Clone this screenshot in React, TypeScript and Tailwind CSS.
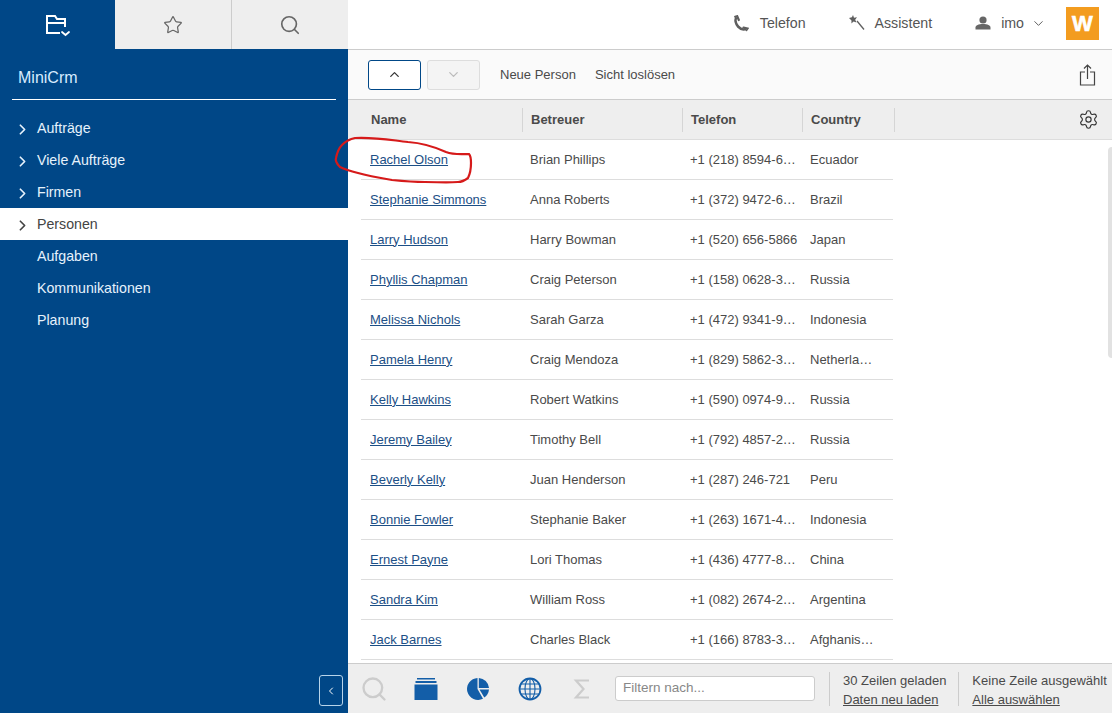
import { ChevronDown, ChevronLeft, ChevronRight, ChevronUp, Search, Settings, Star } from "lucide-react";

const menu = [
  { label: "Aufträge", arrow: true },
  { label: "Viele Aufträge", arrow: true },
  { label: "Firmen", arrow: true },
  { label: "Personen", arrow: true, active: true },
  { label: "Aufgaben" },
  { label: "Kommunikationen" },
  { label: "Planung" },
];

const people = [
  ["Rachel Olson", "Brian Phillips", "+1 (218) 8594-6…", "Ecuador"],
  ["Stephanie Simmons", "Anna Roberts", "+1 (372) 9472-6…", "Brazil"],
  ["Larry Hudson", "Harry Bowman", "+1 (520) 656-5866", "Japan"],
  ["Phyllis Chapman", "Craig Peterson", "+1 (158) 0628-3…", "Russia"],
  ["Melissa Nichols", "Sarah Garza", "+1 (472) 9341-9…", "Indonesia"],
  ["Pamela Henry", "Craig Mendoza", "+1 (829) 5862-3…", "Netherla…"],
  ["Kelly Hawkins", "Robert Watkins", "+1 (590) 0974-9…", "Russia"],
  ["Jeremy Bailey", "Timothy Bell", "+1 (792) 4857-2…", "Russia"],
  ["Beverly Kelly", "Juan Henderson", "+1 (287) 246-721", "Peru"],
  ["Bonnie Fowler", "Stephanie Baker", "+1 (263) 1671-4…", "Indonesia"],
  ["Ernest Payne", "Lori Thomas", "+1 (436) 4777-8…", "China"],
  ["Sandra Kim", "William Ross", "+1 (082) 2674-2…", "Argentina"],
  ["Jack Barnes", "Charles Black", "+1 (166) 8783-3…", "Afghanis…"],
];

function FolderIcon() {
  return (
    <svg width="26" height="24" viewBox="0 0 26 24" fill="none" stroke="white" strokeWidth="2">
      <path d="M15 19H2V2h8l2 3h8v8" />
      <path d="M2 9h18" />
      <path d="M17 18l3.500 3 3.500-3" strokeWidth="1.800" strokeLinecap="round" />
    </svg>
  );
}

function PhoneIcon() {
  return (
    <svg width="16" height="17" viewBox="0 0 16 17" fill="none" stroke="#5f5f5f">
      <path d="M3.500 2.500C1.500 5 3 9 5 11.500C7.500 14 10.500 15.500 13 13.500" strokeWidth="2.600" />
      <path d="M2.200 1.800L4.200 1.200L5.800 5" strokeWidth="2.200" strokeLinecap="round" />
      <path d="M10.500 12.500L14.500 13.500L13.500 15" strokeWidth="2.200" strokeLinecap="round" />
    </svg>
  );
}

function WandIcon() {
  return (
    <svg width="16" height="16" viewBox="0 0 16 16" fill="#5f5f5f">
      <path d="M4 0l1 2.700 3-.4-1.800 2.400 1.300 2.700-2.900-.9-2.200 2 .1-3L0 3l2.900-.7z" />
      <path d="M7.500 6.500l1-1 7 8.500-1 1z" />
    </svg>
  );
}

function UserIcon() {
  return (
    <svg width="16" height="14" viewBox="0 0 16 14" fill="#666">
      <circle cx="8" cy="4" r="3.600" />
      <path d="M0.500 13.500v-2c0-2 3-3.500 7.500-3.500s7.500 1.500 7.500 3.500v2z" />
    </svg>
  );
}

function ShareIcon() {
  return (
    <svg width="18" height="22" viewBox="0 0 18 22" fill="none" stroke="#444" strokeWidth="1.200">
      <path d="M6 8H1.500v13h14V8H11" />
      <path d="M8.500 15V1M5 4.500l3.500-3.500 3.500 3.500" />
    </svg>
  );
}

function StackIcon() {
  return (
    <svg width="24" height="24" viewBox="0 0 24 24" fill="#135ea8">
      <rect x="3" y="1" width="18" height="1.500" />
      <rect x="1.500" y="4" width="21" height="2" />
      <rect x="0.500" y="7.500" width="23" height="15.500" />
    </svg>
  );
}

function PieIcon() {
  return (
    <svg width="24" height="24" viewBox="0 0 24 24" fill="#135ea8">
      <path d="M11.500 1a11 11 0 1 0 5.500 20.800l-5.500-9.800z" />
      <path d="M12.800 1a11 11 0 0 1 10.200 10h-10.200z" />
      <path d="M13.500 12.500h9.500a11 11 0 0 1-4.700 8z" />
    </svg>
  );
}

function GlobeIcon() {
  return (
    <svg width="24" height="24" viewBox="0 0 24 24" fill="none" stroke="#135ea8">
      <circle cx="12" cy="12" r="10.500" strokeWidth="1.800" />
      <ellipse cx="12" cy="12" rx="5" ry="10.500" strokeWidth="1.100" />
      <path d="M12 1.500v21M1.500 12h21M3 7h18M3 17h18" strokeWidth="1.100" />
    </svg>
  );
}

function SigmaIcon() {
  return (
    <svg width="24" height="24" viewBox="0 0 24 24" fill="none" stroke="#ccc" strokeWidth="2.200">
      <path d="M19 3.500H6l7.500 8.500L6 20.500h13" />
    </svg>
  );
}

function App() {
  return (
    <div className="relative flex h-[713px] w-[1112px] overflow-hidden bg-white font-['Liberation_Sans',Arial,sans-serif] text-[13px] text-[#4a4a4a]">
      <aside className="flex w-[348px] shrink-0 flex-col bg-[#004787] text-white">
        <div className="flex h-[49px] shrink-0">
          <div className="flex w-[115px] items-center justify-center pt-[2px]">
            <FolderIcon />
          </div>
          <div className="flex w-[117px] items-center justify-center border-r border-[#ccc] bg-[#eee]">
            <Star size={20} strokeWidth={1.5} className="text-[#666]" />
          </div>
          <div className="flex w-[116px] items-center justify-center bg-[#eee]">
            <Search size={22} strokeWidth={1.8} className="text-[#666]" />
          </div>
        </div>
        <div className="mx-3 flex h-[51px] shrink-0 items-center border-b border-white pl-1.5 pt-[8px] text-base text-[#d7ecff]">
          MiniCrm
        </div>
        <nav className="mt-3 flex flex-col text-[14.200px]">
          {menu.map((item) => (
            <div
              key={item.label}
              className={`flex h-8 items-center pt-[2px] ${item.active ? "bg-white text-[#444]" : "text-[#e6f2fc]"}`}
            >
              <div className="flex w-[37px] shrink-0 justify-center pl-[7px]">
                {item.arrow && <ChevronRight size={17} strokeWidth={2.400} />}
              </div>
              {item.label}
            </div>
          ))}
        </nav>
        <div className="mt-auto mb-[7px] mr-[5px] flex justify-end">
          <div className="flex h-[31px] w-6 items-center justify-center rounded-[3px] border border-[#b8d4ea]">
            <ChevronLeft size={12} strokeWidth={2} />
          </div>
        </div>
      </aside>

      <main className="flex min-w-0 flex-1 flex-col">
        <header className="flex h-[50px] shrink-0 items-center justify-end border-b border-[#ccc] pb-[2px] pr-[13px] text-[14.200px] text-[#555]">
          <div className="flex items-center">
            <PhoneIcon />
            <span className="ml-[11px]">Telefon</span>
          </div>
          <div className="ml-[43px] flex items-center">
            <WandIcon />
            <span className="ml-[10px]">Assistent</span>
          </div>
          <div className="ml-[43px] flex items-center">
            <UserIcon />
            <span className="ml-[10px]">imo</span>
            <ChevronDown size={15} strokeWidth={1.5} className="ml-[7px]" />
          </div>
          <div className="ml-[20px] flex h-[33px] w-[33px] items-center justify-center bg-[#f39c1f] text-[22px] font-bold text-white [-webkit-text-stroke:0.6px_white]">
            W
          </div>
        </header>

        <div className="flex h-[50px] shrink-0 items-center border-b border-[#ccc] bg-[#fafafa] pl-5 pr-[15px]">
          <div className="flex h-[30px] w-[53px] items-center justify-center rounded-[3px] border border-[#004787] bg-white">
            <ChevronUp size={15} strokeWidth={2} className="text-[#333]" />
          </div>
          <div className="ml-[6px] flex h-[30px] w-[53px] items-center justify-center rounded-[3px] border border-[#ddd] bg-[#f4f4f4]">
            <ChevronDown size={15} strokeWidth={2} className="text-[#bbb]" />
          </div>
          <span className="ml-5">Neue Person</span>
          <span className="ml-[19px]">Sicht loslösen</span>
          <div className="ml-auto"><ShareIcon /></div>
        </div>

        <div className="flex h-[40px] shrink-0 items-center border-b border-[#ddd] bg-[#eee] px-[13px] font-bold">
          <div className="flex h-6 w-[162px] items-center border-r border-[#d5d5d5] pl-[10px]">Name</div>
          <div className="flex h-6 w-[160px] items-center border-r border-[#d5d5d5] pl-2">Betreuer</div>
          <div className="flex h-6 w-[120px] items-center border-r border-[#d5d5d5] pl-2">Telefon</div>
          <div className="flex h-6 w-[92px] items-center border-r border-[#d5d5d5] pl-2">Country</div>
          <Settings size={21} strokeWidth={1.3} className="ml-auto text-[#333]" />
        </div>

        <div className="relative min-h-0 flex-1 overflow-hidden pl-[13px]">
          {people.map((p) => (
            <div
              key={p[0]}
              className="grid h-10 w-[532px] grid-cols-[160px_160px_120px_92px] items-center border-b border-[#ddd] whitespace-nowrap"
            >
              <div className="pl-[9px]">
                <a className="text-[#1c4f86] underline">{p[0]}</a>
              </div>
              <div className="pl-[9px]">{p[1]}</div>
              <div className="pl-[9px]">{p[2]}</div>
              <div className="pl-[9px]">{p[3]}</div>
            </div>
          ))}
          <div className="absolute right-0 top-[7px] h-[211px] w-[4px] rounded-l-sm bg-[#e2e2e2]" />
        </div>

        <footer className="flex h-[50px] shrink-0 items-center whitespace-nowrap border-t border-[#ccc] bg-[#eee]">
          <Search size={28} strokeWidth={2} className="ml-[12px] text-[#ccc]" />
          <div className="ml-[26px]"><StackIcon /></div>
          <div className="ml-[28px]"><PieIcon /></div>
          <div className="ml-[28px]"><GlobeIcon /></div>
          <div className="ml-[28px]"><SigmaIcon /></div>
          <div className="ml-[21px] flex h-[25px] w-[200px] items-center rounded-[3px] border border-[#ccc] bg-white pl-[7px] text-[13.500px] text-[#888]">
            Filtern nach...
          </div>
          <div className="ml-[14px] flex h-[34px] flex-col justify-between border-l border-[#ccc] pl-[13px] pt-px leading-4">
            <span>30 Zeilen geladen</span>
            <span className="mb-[-2px] underline">Daten neu laden</span>
          </div>
          <div className="ml-[12px] flex h-[34px] flex-col justify-between border-l border-[#ccc] pl-[13px] pt-px leading-4">
            <span>Keine Zeile ausgewählt</span>
            <span className="mb-[-2px] underline">Alle auswählen</span>
          </div>
        </footer>
      </main>

      <svg className="absolute left-[330px] top-[134px]" width="146" height="54" viewBox="0 0 146 54" fill="none">
        <path
          d="M25 4C45 3 60 6 78 8C92 9 105 13 116 18C124 21 131 20 139 20C141 22 141 26 141 29C141 34 140 40 138 44C134 47 130 48 128 48C115 49 108 48 95 48C85 48 72 47 62 46C50 44 38 42 28 39C20 37 14 35 10 33C7 30 5 27 6 24C7 19 9 14 12 11C16 7 20 5 25 4Z"
          stroke="#d61a1a"
          strokeWidth="2.200"
        />
      </svg>
    </div>
  );
}

export default App;
